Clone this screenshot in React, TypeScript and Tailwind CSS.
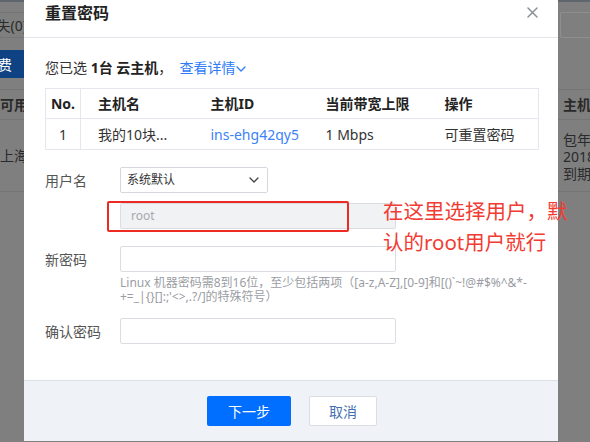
import React from "react";

const Chevron = ({ color, w = 10, h = 6 }: { color: string; w?: number; h?: number }) => (
  <svg width={w} height={h} viewBox="0 0 10 6" fill="none">
    <path d="M1 1l4 4 4-4" stroke={color} strokeWidth="1.3" strokeLinecap="round" strokeLinejoin="round" />
  </svg>
);

function LeftStrip() {
  return (
    <div className="w-[24px] shrink-0 overflow-hidden flex flex-col text-[14px] text-[#2a2a2a]">
      <div className="h-[2px] bg-[#5f666e]" />
      <div className="h-[10px]" />
      <div className="h-[26px] border-y border-[#757575] flex justify-end items-center">
        <span className="whitespace-nowrap -mr-[3px]">已失(0)</span>
      </div>
      <div className="h-[12px]" />
      <div className="h-[28px] bg-[#0f4282] flex justify-end items-center pr-[12px] text-white">
        <span className="whitespace-nowrap">续费</span>
      </div>
      <div className="h-[11px]" />
      <div className="h-[31px] border-y border-[#757575] flex items-center">
        <span className="whitespace-nowrap font-bold">可用区</span>
      </div>
      <div className="h-[72px] border-b border-[#757575] flex items-start pt-[25px]">
        <span className="whitespace-nowrap">上海二区</span>
      </div>
    </div>
  );
}

function RightStrip() {
  return (
    <div className="flex-1 overflow-hidden flex flex-col text-[14px] text-[#2a2a2a]">
      <div className="h-[2px] bg-[#5f666e]" />
      <div className="h-[10px]" />
      <div className="h-[26px] ml-[2px] border border-r-0 border-[#8e8e8e] rounded-l-[2px]" />
      <div className="h-[51px]" />
      <div className="h-[31px] border-y border-[#757575] flex items-center pl-[5px]">
        <span className="whitespace-nowrap font-bold">主机计费模式</span>
      </div>
      <div className="h-[72px] border-b border-[#757575] flex flex-col pl-[5px] pt-[11px] leading-[17px]">
        <span className="whitespace-nowrap">包年包月</span>
        <span className="whitespace-nowrap">2018-05-10</span>
        <span className="whitespace-nowrap">到期</span>
      </div>
    </div>
  );
}

function FormRow({ label, children }: { label: string; children: React.ReactNode }) {
  return (
    <div className="flex items-center">
      <div className="w-[75px] text-[14px] text-[#555]">{label}</div>
      {children}
    </div>
  );
}

function Modal() {
  const cols = ["w-[35px]", "w-[113px]", "w-[115px]", "w-[119px]", "w-[111px]"];
  return (
    <div className="w-[534px] h-[441px] shrink-0 bg-white flex flex-col">
      <div className="h-[38px] border-b border-[#e2e5e9] flex justify-between pl-[21px] pr-[20px]">
        <span className="text-[16px] font-bold leading-[26px] text-[#222]">重置密码</span>
        <svg width="11" height="11" viewBox="0 0 11 11" className="mt-[7px]">
          <path d="M1 1l9 9M10 1l-9 9" stroke="#8b9097" strokeWidth="1.5" strokeLinecap="round" />
        </svg>
      </div>

      <div className="flex-1 px-[21px] pt-[20px]">
        <p className="text-[14px] leading-[20px] text-[#333] flex items-center whitespace-pre">
          <span>您已选 </span>
          <span className="font-bold text-[#222]">1台 云主机</span>
          <span>，  </span>
          <span className="text-[#2f7cf6]">查看详情</span>
          <span className="mt-[2px]">
            <Chevron color="#2f7cf6" />
          </span>
        </p>

        <table className="mt-[10px] w-[493px] border-collapse border border-[#e4e8ee] text-[14px] table-fixed">
          <thead>
            <tr className="h-[30px] font-bold text-[#222] text-left">
              <th className={`${cols[0]} text-center font-bold border-r border-[#e4e8ee]`}>No.</th>
              <th className={`${cols[1]} pl-[17px] font-bold`}>主机名</th>
              <th className={`${cols[2]} pl-[17px] font-bold`}>主机ID</th>
              <th className={`${cols[3]} pl-[17px] font-bold`}>当前带宽上限</th>
              <th className={`${cols[4]} pl-[17px] font-bold`}>操作</th>
            </tr>
          </thead>
          <tbody>
            <tr className="h-[31px] border-t border-[#e4e8ee] text-[#333]">
              <td className="text-center border-r border-[#e4e8ee]">1</td>
              <td className="pl-[17px]">我的10块...</td>
              <td className="pl-[17px] text-[#3d82f7]">ins-ehg42qy5</td>
              <td className="pl-[17px]">1 Mbps</td>
              <td className="pl-[17px]">可重置密码</td>
            </tr>
          </tbody>
        </table>

        <div className="mt-[17px] flex flex-col">
          <FormRow label="用户名">
            <div className="w-[148px] h-[26px] border border-[#d5d9df] rounded-[2px] flex items-center justify-between pl-[6px] pr-[8px] text-[12px] text-[#333]">
              <span>系统默认</span>
              <Chevron color="#444" />
            </div>
          </FormRow>

          <div className="mt-[10px] pl-[75px]">
            <div className="w-[276px] h-[26px] border border-[#dadde2] bg-[#f1f2f4] rounded-[2px] flex items-center pl-[10px] text-[12px] text-[#a5a8ad]">
              root
            </div>
          </div>

          <div className="mt-[17px]">
            <FormRow label="新密码">
              <div className="w-[276px] h-[26px] border border-[#dadde2] rounded-[2px]" />
            </FormRow>
          </div>

          <p className="mt-[4px] pl-[75px] text-[12px] leading-[14px] text-[#9a9da3] whitespace-nowrap">
            Linux 机器密码需8到16位，至少包括两项（[a-z,A-Z],[0-9]和[()`~!@#$%^&amp;*-
            <br />
            +=_|{"{}"}[]:;'&lt;&gt;,.?/]的特殊符号）
          </p>

          <div className="mt-[14px]">
            <FormRow label="确认密码">
              <div className="w-[276px] h-[26px] border border-[#dadde2] rounded-[2px]" />
            </FormRow>
          </div>
        </div>
      </div>

      <div className="h-[61px] border-t border-[#dce1e7] bg-[#eff2f6] flex items-start pt-[15px] pl-[183px] gap-[18px]">
        <button className="w-[84px] h-[30px] rounded-[2px] bg-[#006eff] text-white text-[14px]">下一步</button>
        <button className="w-[68px] h-[30px] rounded-[2px] bg-white border border-[#dadde2] text-[#4470b0] text-[14px]">
          取消
        </button>
      </div>
    </div>
  );
}

export default function App() {
  return (
    <div className="relative w-[590px] h-[442px] overflow-hidden bg-[#7f7f7f] flex font-['Noto_Sans','Noto_Sans_CJK_SC',sans-serif]">
      <LeftStrip />
      <Modal />
      <RightStrip />

      {/* annotation: highlight box and note */}
      <div className="absolute left-[107px] top-[201px] w-[242px] h-[31px] border-2 border-[#ee2a24] rounded-[2px]" />
      <div className="absolute left-[383px] top-[196px] text-[20.5px] leading-[31px] text-[#f23b33] whitespace-nowrap">
        在这里选择用户，默
        <br />
        认的root用户就行
      </div>
    </div>
  );
}
